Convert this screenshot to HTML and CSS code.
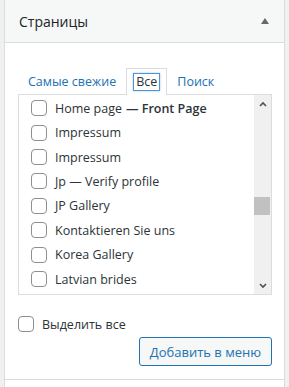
FILE: index.html
```html
<!DOCTYPE html>
<html lang="ru">
<head>
    <meta charset="UTF-8">
    <title>Страницы</title>
    <link rel="stylesheet" href="styles.css">
</head>
<body>
    <div class="postbox">
        <h3 class="hndle">
            <span>Страницы</span>
            <span class="toggle-arrow"></span>
        </h3>
        <div class="inside">
            <ul class="tabs">
                <li><a href="#">Самые свежие</a></li>
                <li class="active"><a href="#" class="focused">Все</a></li>
                <li><a href="#">Поиск</a></li>
            </ul>
            <div class="panel">
                <ul class="checklist">
                    <li><label><input type="checkbox"> Home page <b>— Front Page</b></label></li>
                    <li><label><input type="checkbox"> Impressum</label></li>
                    <li><label><input type="checkbox"> Impressum</label></li>
                    <li><label><input type="checkbox"> Jp — Verify profile</label></li>
                    <li><label><input type="checkbox"> JP Gallery</label></li>
                    <li><label><input type="checkbox"> Kontaktieren Sie uns</label></li>
                    <li><label><input type="checkbox"> Korea Gallery</label></li>
                    <li><label><input type="checkbox"> Latvian brides</label></li>
                </ul>
                <div class="scrollbar">
                    <div class="scroll-btn">
                        <svg width="8" height="6" viewBox="0 0 8 6"><path d="M1 5 L4 2 L7 5" fill="none" stroke="#505050" stroke-width="1.6"/></svg>
                    </div>
                    <div class="scroll-track">
                        <div class="scroll-thumb" style="margin-top: 85px;"></div>
                    </div>
                    <div class="scroll-btn">
                        <svg width="8" height="6" viewBox="0 0 8 6"><path d="M1 1 L4 4 L7 1" fill="none" stroke="#505050" stroke-width="1.6"/></svg>
                    </div>
                </div>
            </div>
            <div class="actions">
                <label class="select-all"><input type="checkbox"> Выделить все</label>
                <button type="button" class="button">Добавить в меню</button>
            </div>
        </div>
    </div>
    <div class="next-section"></div>
</body>
</html>
```

FILE: styles.css
```css
body {
    margin: 0;
    background: #f0f0f1;
    font-family: "Open Sans", "Noto Sans", sans-serif;
    font-size: 12.5px;
    color: #2c3338;
}
.postbox {
    margin-left: 4px;
    width: 279px;
    background: #fff;
    border-left: 1px solid #dcdcde;
    border-right: 1px solid #dcdcde;
}
.hndle {
    margin: 0;
    height: 42px;
    padding: 0 14px 0 14px;
    display: flex;
    align-items: center;
    justify-content: space-between;
    background: #f6f7f7;
    border-bottom: 1px solid #dcdcde;
    font-size: 14px;
    font-weight: normal;
    color: #1d2327;
}
.toggle-arrow {
    width: 0;
    height: 0;
    border-left: 4.5px solid transparent;
    border-right: 4.5px solid transparent;
    border-bottom: 6px solid #646970;
    margin-right: 1px;
}
.inside {
    padding: 25px 12px 0 13px;
    height: 311px;
    border-bottom: 1px solid #dcdcde;
}
.tabs {
    list-style: none;
    margin: 0 0 -1px 0;
    padding: 0;
    display: flex;
}
.tabs li {
    height: 25px;
    padding: 0 9px;
    border: 1px solid transparent;
    border-bottom: none;
    display: flex;
    align-items: center;
}
.tabs li.active {
    border-color: #dcdcde;
    background: #fff;
    position: relative;
    z-index: 1;
    height: 26px;
    padding: 0 7px;
}
.tabs a {
    color: #2271b1;
    text-decoration: none;
    line-height: 16px;
}
.tabs .active a {
    color: #2c3338;
}
.tabs a.focused {
    padding: 0 2px;
    box-shadow: 0 0 0 1px #4f94d4, 0 0 2px 1px rgba(79, 148, 212, 0.5);
}
.panel {
    display: flex;
    height: 199px;
    border: 1px solid #dcdcde;
}
.checklist {
    flex: 1;
    list-style: none;
    margin: 0;
    padding: 1px 0 0 12px;
    overflow: hidden;
}
.checklist li {
    height: 24.43px;
    display: flex;
    align-items: center;
}
.checklist label,
.select-all {
    display: flex;
    align-items: center;
    gap: 8px;
}
input[type="checkbox"] {
    appearance: none;
    margin: 0;
    width: 16px;
    height: 16px;
    border: 1px solid #8c8f94;
    border-radius: 4px;
    background: #fff;
}
.checklist b {
    font-weight: 600;
    margin-left: -4px;
}
.scrollbar {
    width: 17px;
    background: #f0f0f0;
    display: flex;
    flex-direction: column;
}
.scroll-btn {
    height: 17px;
    display: flex;
    align-items: center;
    justify-content: center;
}
.scroll-track {
    flex: 1;
}
.scroll-thumb {
    height: 18px;
    margin-left: 0;
    width: 16px;
    background: #c1c1c1;
}
.actions {
    display: flex;
    flex-direction: column;
    padding-top: 21px;
}
.select-all {
    height: 16px;
}
.button {
    align-self: flex-end;
    margin-top: 5px;
    height: 29px;
    padding: 0 10px;
    font-family: inherit;
    font-size: 13px;
    color: #2271b1;
    background: #f6f7f7;
    border: 1px solid #2271b1;
    border-radius: 3px;
}
.next-section {
    margin-left: 4px;
    width: 279px;
    height: 10px;
    background: #fff;
    border-left: 1px solid #dcdcde;
    border-right: 1px solid #dcdcde;
}
```
